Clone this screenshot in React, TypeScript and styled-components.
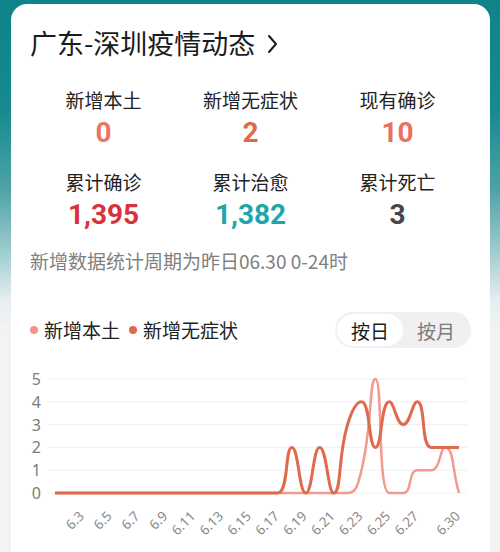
import styled, { createGlobalStyle } from "styled-components";

const GlobalStyle = createGlobalStyle`
  html, body {
    margin: 0;
    padding: 0;
  }
  body {
    font-family: "Noto Sans CJK SC", "Noto Sans", sans-serif;
    background: #f2f3f5;
  }
`;

const Page = styled.div`
  min-height: 552px;
  padding: 4px 10px 0 11px;
  box-sizing: border-box;
  background: linear-gradient(
    180deg,
    #0e8488 0px,
    #168a8e 110px,
    #4fa3a7 190px,
    #9ccbce 250px,
    #e6eef0 300px,
    #f2f3f5 330px,
    #f2f3f5 552px
  );
`;

const Card = styled.div`
  background: #fff;
  border-radius: 16px 16px 0 0;
  min-height: 548px;
  padding: 21px 19px 0;
  box-sizing: border-box;
`;

const Title = styled.div`
  display: flex;
  align-items: center;
  gap: 12px;
  font-size: 27px;
  line-height: 36px;
  color: #1c1c1c;
  svg {
    margin-top: 1px;
  }
`;

const StatsGrid = styled.div`
  display: grid;
  grid-template-columns: repeat(3, 1fr);
  row-gap: 19px;
  margin-top: 26px;
`;

const Stat = styled.div`
  display: flex;
  flex-direction: column;
  align-items: center;
`;

const StatLabel = styled.div`
  font-size: 19px;
  line-height: 26px;
  color: #222;
`;

const StatValue = styled.div<{ $color: string }>`
  margin-top: 3px;
  font-family: Roboto, "Noto Sans CJK SC", sans-serif;
  font-weight: 700;
  font-size: 28px;
  line-height: 34px;
  color: ${(p) => p.$color};
`;

const Note = styled.div`
  margin-top: 17px;
  font-size: 19px;
  line-height: 24px;
  color: #808080;
`;

const LegendRow = styled.div`
  display: flex;
  align-items: center;
  justify-content: space-between;
  margin-top: 39px;
`;

const Legend = styled.div`
  display: flex;
  align-items: center;
  gap: 9px;
`;

const LegendItem = styled.div<{ $color: string }>`
  display: flex;
  align-items: center;
  gap: 6px;
  font-size: 19px;
  line-height: 26px;
  color: #222;
  &::before {
    content: "";
    width: 8px;
    height: 8px;
    border-radius: 50%;
    background: ${(p) => p.$color};
  }
`;

const Toggle = styled.div`
  display: flex;
  padding: 2px;
  border-radius: 18px;
  background: #f0f0f2;
`;

const ToggleOption = styled.div<{ $active?: boolean }>`
  width: 66px;
  height: 32px;
  display: flex;
  align-items: center;
  justify-content: center;
  border-radius: 16px;
  font-size: 19px;
  color: ${(p) => (p.$active ? "#1c1c1c" : "#7a7a7a")};
  background: ${(p) => (p.$active ? "#fff" : "transparent")};
`;

const Chart = styled.svg`
  display: block;
  margin-top: 12px;
  font-family: "Noto Sans", "DejaVu Sans", sans-serif;
`;

const local = [
  0, 0, 0, 0, 0, 0, 0, 0, 0, 0, 0, 0, 0, 0, 0, 0, 0, 0, 0, 0, 0, 0, 1, 5, 0,
  0, 1, 1, 2, 0,
];
const asym = [
  0, 0, 0, 0, 0, 0, 0, 0, 0, 0, 0, 0, 0, 0, 0, 0, 0, 2, 0, 2, 0, 3, 4, 2, 4,
  3, 4, 2, 2, 2,
];

const xAt = (i: number) => 25 + (i * 404) / 29;
const yAt = (v: number) => 133 - v * 22.8;

const clamp = (v: number, a: number, b: number) =>
  Math.min(Math.max(v, Math.min(a, b)), Math.max(a, b));

// echarts-like smoothing, control points kept inside each segment
function smoothPath(vals: number[]) {
  const pts = vals.map((v, i) => [xAt(i), yAt(v)]);
  const n = pts.length;
  const cin: number[][] = [];
  const cout: number[][] = [];
  for (let i = 0; i < n; i++) {
    const p = pts[i];
    const prev = pts[i - 1] ?? p;
    const next = pts[i + 1] ?? p;
    const vx = next[0] - prev[0];
    const vy = next[1] - prev[1];
    const l0 = Math.hypot(p[0] - prev[0], p[1] - prev[1]);
    const l1 = Math.hypot(next[0] - p[0], next[1] - p[1]);
    const sum = l0 + l1;
    if (l0 === 0) {
      cin.push(p);
      cout.push([
        clamp(p[0] + vx * 0.5, p[0], next[0]),
        clamp(p[1] + vy * 0.5, p[1], next[1]),
      ]);
      continue;
    }
    if (l1 === 0) {
      cout.push(p);
      cin.push([
        clamp(p[0] - vx * 0.5, prev[0], p[0]),
        clamp(p[1] - vy * 0.5, prev[1], p[1]),
      ]);
      continue;
    }
    const r1 = l1 / sum;
    let ox = clamp(p[0] + vx * 0.5 * r1, p[0], next[0]);
    let oy = clamp(p[1] + vy * 0.5 * r1, p[1], next[1]);
    const ix = clamp(p[0] - (ox - p[0]) * (l0 / l1), prev[0], p[0]);
    const iy = clamp(p[1] - (oy - p[1]) * (l0 / l1), prev[1], p[1]);
    ox = p[0] + (p[0] - ix) * (l1 / l0);
    oy = p[1] + (p[1] - iy) * (l1 / l0);
    cin.push([ix, iy]);
    cout.push([ox, oy]);
  }
  let d = `M${pts[0][0].toFixed(2)},${pts[0][1].toFixed(2)}`;
  for (let i = 0; i < n - 1; i++) {
    const a = cout[i];
    const b = cin[i + 1];
    const c = pts[i + 1];
    d += ` C${a[0].toFixed(2)},${a[1].toFixed(2)} ${b[0].toFixed(2)},${b[1].toFixed(2)} ${c[0].toFixed(2)},${c[1].toFixed(2)}`;
  }
  return d;
}

const xLabels: [number, string][] = [
  [2, "6.3"],
  [4, "6.5"],
  [6, "6.7"],
  [8, "6.9"],
  [10, "6.11"],
  [12, "6.13"],
  [14, "6.15"],
  [16, "6.17"],
  [18, "6.19"],
  [20, "6.21"],
  [22, "6.23"],
  [24, "6.25"],
  [26, "6.27"],
  [29, "6.30"],
];

const stats = [
  { label: "新增本土", value: "0", color: "#ea7562" },
  { label: "新增无症状", value: "2", color: "#e0694c" },
  { label: "现有确诊", value: "10", color: "#ec7060" },
  { label: "累计确诊", value: "1,395", color: "#d8323e" },
  { label: "累计治愈", value: "1,382", color: "#1fa6a8" },
  { label: "累计死亡", value: "3", color: "#45454a" },
];

const TrendChart = () => (
  <Chart width={441} height={192} viewBox="0 0 441 192">
    {[0, 1, 2, 3, 4, 5].map((v) => (
      <g key={v}>
        <line
          x1={18}
          x2={437}
          y1={yAt(v)}
          y2={yAt(v)}
          stroke="#f0f0f0"
          strokeWidth={1}
        />
        <text
          x={11}
          y={yAt(v)}
          textAnchor="end"
          dominantBaseline="central"
          fontSize={16}
          fill="#7c7c7c"
        >
          {v}
        </text>
      </g>
    ))}
    {xLabels.map(([i, t]) => (
      <text
        key={t}
        x={xAt(i) + 2}
        y={157}
        textAnchor="end"
        fontSize={13.5}
        fill="#8a8a8a"
        transform={`rotate(-45 ${xAt(i) + 2} 157)`}
      >
        {t}
      </text>
    ))}
    <path
      d={smoothPath(local)}
      fill="none"
      stroke="#f29a8c"
      strokeWidth={2.5}
      strokeLinejoin="round"
    />
    <path
      d={smoothPath(asym)}
      fill="none"
      stroke="#df6a4d"
      strokeWidth={3}
      strokeLinejoin="round"
    />
  </Chart>
);

export default function App() {
  return (
    <>
      <GlobalStyle />
      <Page>
        <Card>
          <Title>
            广东-深圳疫情动态
            <svg width="11" height="20" viewBox="0 0 11 20">
              <polyline
                points="2,2 9,10 2,18"
                fill="none"
                stroke="#1c1c1c"
                strokeWidth="2"
                strokeLinecap="round"
                strokeLinejoin="round"
              />
            </svg>
          </Title>
          <StatsGrid>
            {stats.map((s) => (
              <Stat key={s.label}>
                <StatLabel>{s.label}</StatLabel>
                <StatValue $color={s.color}>{s.value}</StatValue>
              </Stat>
            ))}
          </StatsGrid>
          <Note>新增数据统计周期为昨日06.30 0-24时</Note>
          <LegendRow>
            <Legend>
              <LegendItem $color="#f29488">新增本土</LegendItem>
              <LegendItem $color="#e0694c">新增无症状</LegendItem>
            </Legend>
            <Toggle>
              <ToggleOption $active>按日</ToggleOption>
              <ToggleOption>按月</ToggleOption>
            </Toggle>
          </LegendRow>
          <TrendChart />
        </Card>
      </Page>
    </>
  );
}
